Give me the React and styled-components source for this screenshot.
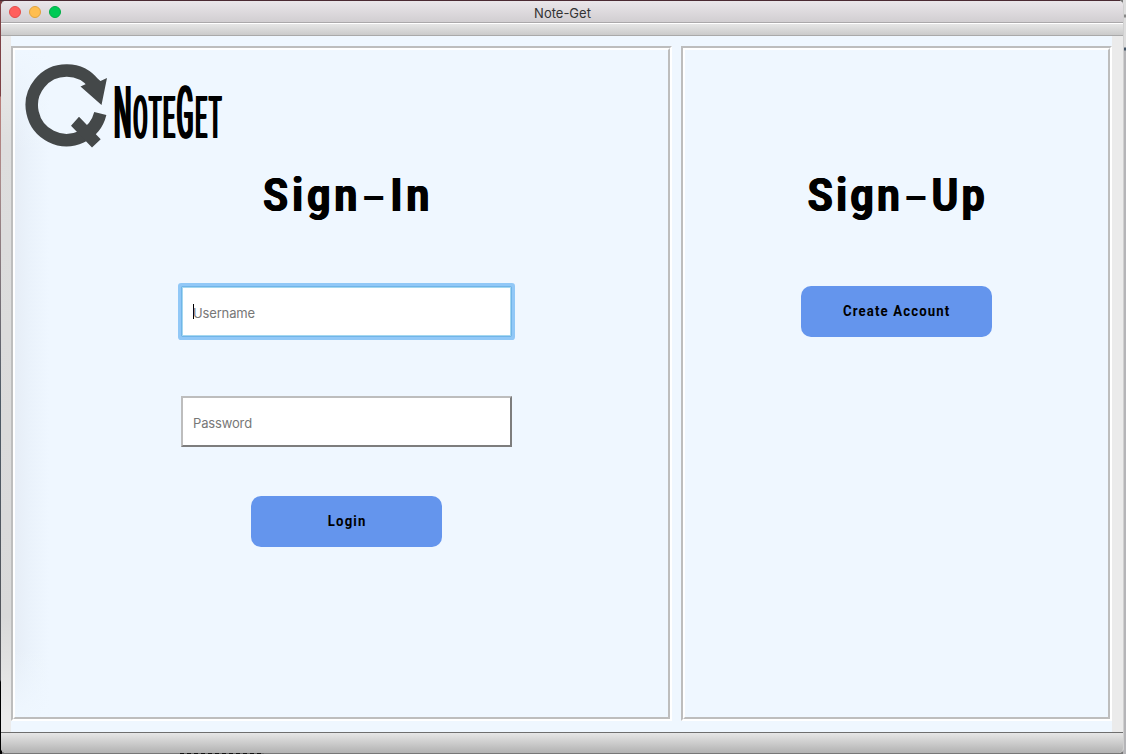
import React from "react";
import styled, { createGlobalStyle } from "styled-components";

const Global = createGlobalStyle`
  * { box-sizing: border-box; }
  body { margin: 0; overflow: hidden; background: #a9a9a9; font-family: Inter, "Liberation Sans", sans-serif; }
`;
const Desktop = styled.div`
  width: 1126px; height: 754px; padding: 1px 2px 1px 1px;
  background:
    linear-gradient(#4b2932, #4b2932) 0 0 / 1120px 1px no-repeat,
    linear-gradient(#7e4245 0 96px, #b97c78 97px, #a98b8b 180px, #4d5a66 400px, #55555a 680px, #000 682px) 0 0 / 2px 100% no-repeat,
    linear-gradient(#ddd 0 14px, #888 15px 17px, #ddd 18px 47px, #456 48px 50px, #b5b5b8 51px) 100% 0 / 3px 100% no-repeat,
    repeating-linear-gradient(90deg, #111 0 4px, #666 4px 7px) 180px 100% / 84px 1px no-repeat,
    #777;
`;
const Window = styled.div`
  height: 752px; display: flex; flex-direction: column; overflow: hidden;
  border-radius: 5px; background: #ececec; border-right: 1px solid #d0d0d0;
`;
const TitleBar = styled.header`
  height: 22px; flex: none; display: grid; grid-template-columns: 1fr auto 1fr; align-items: center;
  padding: 0 0 0 8px; border-bottom: 1px solid #aaa8aa;
  background: linear-gradient(#eae6ea, #d1ced1);
  font-size: 13px; color: #333;
`;
const Lights = styled.div`display: flex; gap: 8px;`;
const Light = styled.i`
  width: 12px; height: 12px; border-radius: 50%;
  background: ${p => p.$fill}; border: 1px solid ${p => p.$edge};
`;
const Title = styled.span`margin-right: 7px; padding-top: 2px;`;
const ToolStrip = styled.div`
  height: 13px; flex: none; border-top: 1px solid #fff; border-bottom: 1px solid #a9a9a9;
  background: linear-gradient(#e6e6e6, #cacaca);
`;
const Body = styled.div`
  height: 696px; flex: none; display: flex; padding: 0 12px 0 10px;
  background: linear-gradient(#ececec, #dedede 110px, #d9d9d9 580px, #ebebeb 680px) 0 0 / 10px 100% no-repeat, #ebebeb;
`;
const Page = styled.main`
  flex: 1; display: flex; gap: 9px; background: #eff7ff; padding: 10px 0 11px;
`;
const Panel = styled.section`
  width: ${p => p.$width}px; flex: none; border: 2px solid; border-color: #bdbdbd #fff #fff #bdbdbd;
  display: flex;
`;
const PanelInner = styled.div`
  flex: 1; border: 2px solid; border-color: #fff #bdbdbd #bdbdbd #fff;
  display: flex; flex-direction: column; align-items: center;
  padding-left: ${p => p.$indent || 0}px;
  background: ${p => p.$shade
    ? "linear-gradient(#eff7ff, #eff7ff00 100px, #eff7ff00 600px, #eff7ff), linear-gradient(90deg, #e6edf6, #eaf2fb 14px, #eff7ff 34px)"
    : "none"};
`;
const LogoRow = styled.div`
  align-self: flex-start; height: 108px; display: flex; padding-top: 12px;
`;
const LogoMark = styled.svg`width: 84px; height: 86px; flex: none;`;
const Wordmark = styled.div`
  height: 86px; width: 114px; margin-left: 5px; white-space: nowrap;
  font: 400 72px/86px Roboto, sans-serif; color: #000;
  text-shadow: -3.5px 0 #000, 3.5px 0 #000, -1.5px 0 #000, 1.5px 0 #000;
  letter-spacing: 6px; transform: translateY(9px) scaleX(0.338); transform-origin: 0 0;
`;
const SmallCaps = styled.span`font-size: 60px; text-transform: uppercase;`;
const Heading = styled.h1`
  margin: ${p => p.$top}px 0 0; height: 60px; white-space: nowrap;
  font: 700 46px/60px Roboto, sans-serif; letter-spacing: ${p => p.$spacing}px; color: #000;
  text-shadow: -0.8px 0 #000, 0.8px 0 #000;
  transform: translateX(1.5px) scaleX(0.88);
`;
const Dash = styled.span`display: inline-block; transform: translate(1px, 2px) scale(1.5, .75); margin: 0 5px;`;
const Field = styled.div`
  width: 331px; height: 51px; margin-top: ${p => p.$top}px; padding: 2px 0 0 10px;
  display: flex; align-items: center; background: #fff; color: #777; font-size: 13px; letter-spacing: -0.15px;
  border: 2px solid; border-color: #bdbdbd #7d7d7d #7d7d7d #bdbdbd;
  ${p => p.$focus && `
    padding: 2px 0 0 11px;
    border: 1px solid #71b5e8;
    border-radius: 1px;
    box-shadow: 0 0 0 3px #91c8f7, inset 0 0 0 1px #a5d8f0;
  `}
`;
const Caret = styled.i`width: 1px; height: 15px; background: #000; margin: 0 -1px 2px 0;`;
const Button = styled.button`
  width: 191px; height: 51px; margin-top: ${p => p.$top}px; padding: 0; border: 0; border-radius: 10px;
  background: #6495ed; color: #000; font: 700 14px/51px Roboto, sans-serif;
`;
const ButtonLabel = styled.span`display: inline-block; letter-spacing: 1.2px; transform: translateX(0.6px) scaleX(0.94);`;
const BottomBar = styled.footer`
  flex: 1; border-top: 1px solid #6e6e6e; background: linear-gradient(#e6e6e6, #b2b2b2);
`;

export default function App() {
  return (
    <>
      <Global />
      <Desktop>
        <Window>
          <TitleBar>
            <Lights>
              <Light $fill="#ff5f5c" $edge="#e24d4b" />
              <Light $fill="#ffbe4f" $edge="#e0a33e" />
              <Light $fill="#00ca56" $edge="#00ad45" />
            </Lights>
            <Title>Note-Get</Title>
          </TitleBar>
          <ToolStrip />
          <Body>
            <Page>
              <Panel $width={661}>
                <PanelInner $indent={10} $shade>
                  <LogoRow>
                    <LogoMark viewBox="25 62 84 86">
                      <path d="M100.3 113.5 A34.75 34.75 0 1 1 94 84" fill="none" stroke="#444849" strokeWidth="12.5" />
                      <path d="M107 78 L101.5 105 L80.5 86.5 L86 84 L94 76 L100.5 81Z M79 116.7 L100.7 139.3 L92 147.5 L71 125.7Z" fill="#444849" />
                    </LogoMark>
                    <Wordmark>N<SmallCaps>ote</SmallCaps>G<SmallCaps>et</SmallCaps></Wordmark>
                  </LogoRow>
                  <Heading $top={7} $spacing={4.8}>Sign<Dash>-</Dash>In</Heading>
                  <Field $top={61} $focus><Caret />Username</Field>
                  <Field $top={59}>Password</Field>
                  <Button $top={49}><ButtonLabel>Login</ButtonLabel></Button>
                </PanelInner>
              </Panel>
              <Panel $width={431}>
                <PanelInner>
                  <Heading $top={115} $spacing={4}>Sign<Dash>-</Dash>Up</Heading>
                  <Button $top={61}><ButtonLabel>Create Account</ButtonLabel></Button>
                </PanelInner>
              </Panel>
            </Page>
          </Body>
          <BottomBar />
        </Window>
      </Desktop>
    </>
  );
}
